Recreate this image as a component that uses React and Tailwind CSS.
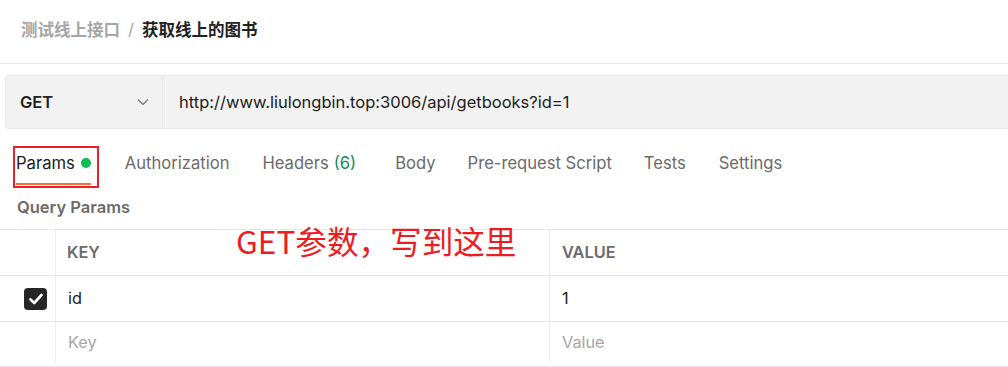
import React from "react";

function Chevron() {
  return (
    <svg width="12" height="8" viewBox="0 0 12 8" fill="none">
      <polyline points="1,1.5 6,6.5 11,1.5" stroke="#6b6b6b" strokeWidth="1.1" />
    </svg>
  );
}

function CheckBox() {
  return (
    <div className="w-[23px] h-[22px] rounded-[4px] bg-[#262626] flex items-center justify-center">
      <svg width="14" height="12" viewBox="0 0 14 12" fill="none">
        <polyline points="1.5,6.5 5.2,10 12.5,2" stroke="white" strokeWidth="2.6" strokeLinecap="round" strokeLinejoin="round" />
      </svg>
    </div>
  );
}

export default function App() {
  const tabs = [
    { label: "Authorization", cls: "ml-[34px]" },
    { label: "Headers", extra: "(6)", cls: "ml-[33px]" },
    { label: "Body", cls: "ml-[39px]" },
    { label: "Pre-request Script", cls: "ml-[32px]" },
    { label: "Tests", cls: "ml-[32px]" },
    { label: "Settings", cls: "ml-[33px]" },
  ];
  return (
    <div className="relative w-[1008px] h-[367px] overflow-hidden bg-white font-['Inter','Noto_Sans_CJK_SC',sans-serif]">
      {/* breadcrumb */}
      <div className="h-[64px] border-b border-[#e6e6e6] flex items-center pb-[5px] pl-[21px] text-[16.5px] font-bold font-['Noto_Sans_CJK_SC',sans-serif]">
        <span className="text-[#a6a6a6]">测试线上接口</span>
        <span className="text-[#a6a6a6] ml-[8px] mr-[8px] font-normal font-['Inter',sans-serif]">/</span>
        <span className="text-[#212121]">获取线上的图书</span>
      </div>

      {/* url bar */}
      <div className="mt-[11px] ml-[5px] mr-[-6px] h-[54px] flex bg-[#f2f2f2] border border-[#e6e6e6] rounded-[4px]">
        <div className="w-[157px] flex items-center justify-between pl-[14px] pr-[13px] border-r border-[#e6e6e6]">
          <span className="text-[16.5px] font-semibold text-[#212121]">GET</span>
          <Chevron />
        </div>
        <div className="flex items-center pl-[16px] text-[16.5px] text-[#212121]">
          http://www.liulongbin.top:3006/api/getbooks?id=1
        </div>
      </div>

      {/* tabs */}
      <div className="mt-[17px] pl-[16px] flex items-start text-[16.6px]">
        <div className="relative">
          <div className="pt-[6px] pb-[9px] border-b-2 border-[#ff6c37] flex items-center leading-[22px]">
            <span className="text-[#212121]">Params</span>
            <span className="ml-[6px] w-[10px] h-[10px] rounded-full bg-[#0cbb52]" />
          </div>
          <div className="absolute left-[-3px] top-0 w-[86px] h-[42px] border-2 border-[#e8202a]" />
        </div>
        {tabs.map((t) => (
          <div key={t.label} className={`pt-[6px] leading-[22px] text-[#6b6b6b] ${t.cls}`}>
            {t.label}
            {t.extra && <span className="ml-[5px] text-[#0f8a64]">{t.extra}</span>}
          </div>
        ))}
      </div>

      {/* query params */}
      <div className="mt-[10px] pl-[17px] leading-[24px] text-[16.5px] font-semibold text-[#6b6b6b]">
        Query Params
      </div>

      {/* table */}
      <div className="mt-[10px] border-t border-[#e6e6e6] text-[16.3px]">
        <div className="grid grid-cols-[55px_494px_1fr] h-[46px] border-b border-[#e6e6e6]">
          <div />
          <div className="border-l border-[#ececec] flex items-center pl-[11px] font-semibold text-[#6b6b6b]">KEY</div>
          <div className="border-l border-[#ececec] flex items-center pl-[12px] font-semibold text-[#6b6b6b]">VALUE</div>
        </div>
        <div className="grid grid-cols-[55px_494px_1fr] h-[46px] border-b border-[#e6e6e6]">
          <div className="flex items-center pl-[24px]">
            <CheckBox />
          </div>
          <div className="border-l border-[#ececec] flex items-center pl-[12px] text-[#212121]">id</div>
          <div className="border-l border-[#ececec] flex items-center pl-[12px] text-[#212121]">1</div>
        </div>
        <div className="grid grid-cols-[55px_494px_1fr] h-[45px] pb-[4px] border-b border-[#e6e6e6]">
          <div />
          <div className="border-l border-[#ececec] flex items-center pl-[12px] text-[#a6a6a6]">Key</div>
          <div className="border-l border-[#ececec] flex items-center pl-[12px] text-[#a6a6a6]">Value</div>
        </div>
      </div>

      {/* annotation */}
      <div className="absolute left-[236px] top-[220px] text-[31.6px] leading-[40px] text-[#ec1c24] font-['Noto_Sans_CJK_SC',sans-serif] whitespace-nowrap">
        GET参数，写到这里
      </div>
    </div>
  );
}
